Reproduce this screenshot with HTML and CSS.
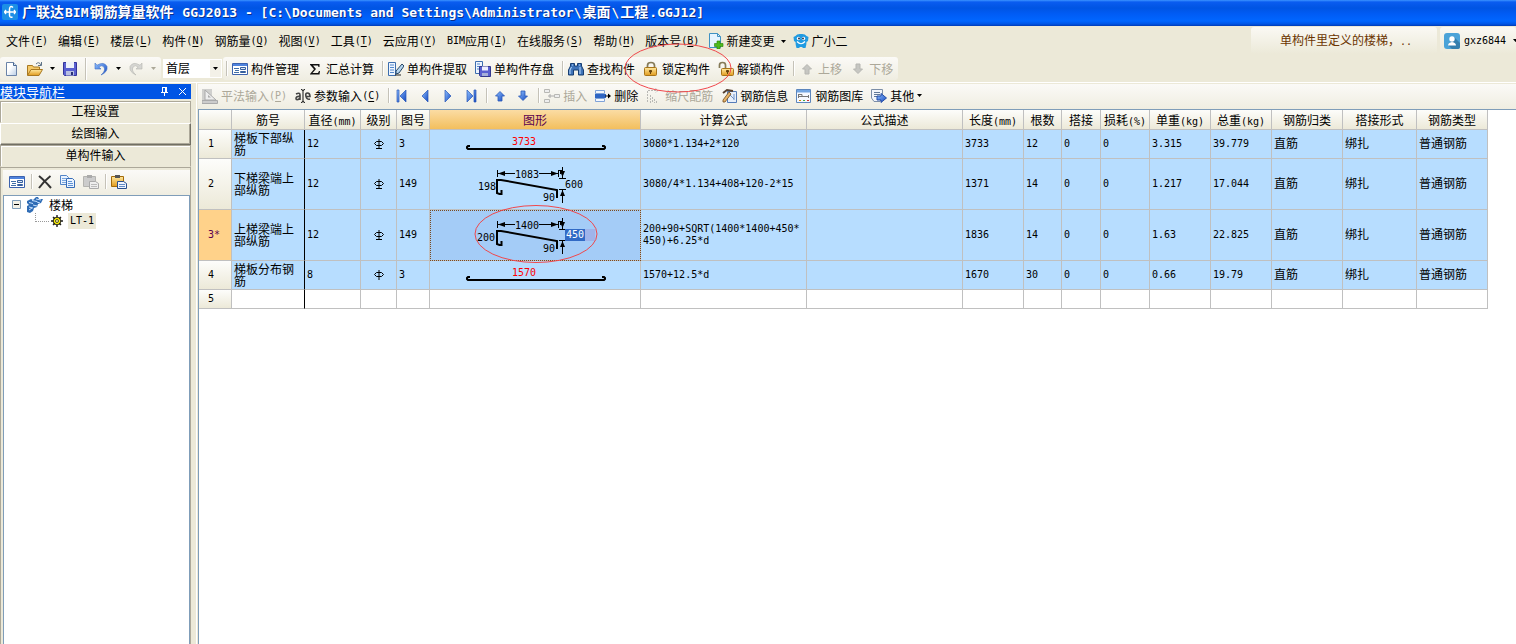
FILE: index.html
```html
<!DOCTYPE html>
<html lang="zh-CN">
<head>
<meta charset="utf-8">
<title>广联达BIM钢筋算量软件 GGJ2013</title>
<link rel="stylesheet" href="styles.css">
</head>
<body>
<svg class="sprite" aria-hidden="true">
  <defs>
    <linearGradient id="gBlue" x1="0" y1="0" x2="1" y2="1"><stop offset="0" stop-color="#8fc0ff"/><stop offset="1" stop-color="#1448c0"/></linearGradient>
    <linearGradient id="gGold" x1="0" y1="0" x2="0" y2="1"><stop offset="0" stop-color="#ffe9a0"/><stop offset="1" stop-color="#e09a1c"/></linearGradient>
    <linearGradient id="gPage" x1="0" y1="0" x2="1" y2="1"><stop offset="0.4" stop-color="#fff"/><stop offset="1" stop-color="#b8cde6"/></linearGradient>
  </defs>
  <symbol id="new" viewBox="0 0 16 16"><path d="M2.500 1.500h7l3 3v10h-10z" fill="url(#gPage)" stroke="#6a83a8"/><path d="M9.500 1.500v3h3" fill="#dbe8f7" stroke="#49668f"/></symbol>
  <symbol id="open" viewBox="0 0 16 16"><path d="M.5 14V4.500h5l1 1.500h6v3" fill="#f5c968" stroke="#a87821"/><path d="M.5 14.500L4 8.500h11.500l-3.500 6z" fill="url(#gGold)" stroke="#a87821"/><path d="M9 3q3-3 5 1M14.500 1v3.500H11" fill="none" stroke="#5e7286"/></symbol>
  <symbol id="save" viewBox="0 0 16 16"><path d="M1.500 1.500h13v13h-12l-1-1z" fill="#5a60d0" stroke="#34349a"/><path d="M4 1h8v6H4z" fill="#eef2fa"/><path d="M4 10h8v4.500H4z" fill="#b8bfe2"/><path d="M9 11h2v3H9z" fill="#272f78"/></symbol>
  <symbol id="undo" viewBox="0 0 16 16"><path d="M2 2v6h6L5.800 6Q9 3.500 11 6q2 4-3 8 7-3 6-8.500Q11 0 4 4.200z" fill="url(#gBlue)" stroke="#3f6fc5" stroke-width=".6"/></symbol>
  <symbol id="redo" viewBox="0 0 16 16"><path d="M14 2v6H8l2.200-2Q7 3.500 5 6q-2 4 3 8-7-3-6-8.500Q5 0 12 4.200z" fill="#d5d5d2" stroke="#b5b5b0" stroke-width=".6"/></symbol>
  <symbol id="form" viewBox="0 0 16 16"><path d="M.5 2.500h15v11H.5z" fill="#fff" stroke="#3c62ae"/><path d="M1 3h14v2H1z" fill="#4f83dd"/><path d="M2 7.500h5M3 9.500h4M2 11.500h5" stroke="#416fa8"/><path d="M8.500 6.500h5v2h-5zM8.500 10.500h5v1h-5z" fill="#dce7f6" stroke="#365f9e"/></symbol>
  <symbol id="sum" viewBox="0 0 16 16"><path d="M3 3h9.500v3h-1L11 4.500H6L9 8l-3.500 4H11l1-2h1l-.5 3.500H3V13l4-4.700L3 3.700z" fill="#111"/></symbol>
  <symbol id="extract" viewBox="0 0 16 16"><path d="M.5 1.500h7v13h-7z" fill="#eef5ff" stroke="#3d6eaf"/><path d="M2 4h4M2 6.500h4M2 9h4M2 11.500h4" stroke="#5287cc"/><path d="M14 3L8 10v3l3-1 5-7z" fill="#b6d5ef" stroke="#274665"/><path d="M7 14h6" stroke="#222"/></symbol>
  <symbol id="store" viewBox="0 0 16 16"><path d="M.5.500h7v12h-7z" fill="#eef5ff" stroke="#3d6eaf"/><path d="M2 3h3M2 5.500h3M2 8h3" stroke="#5287cc"/><path d="M4.500 5.500h11v10h-10l-1-1z" fill="#5a60d0" stroke="#33398e"/><path d="M7 5.500h6v4H7z" fill="#eef"/><path d="M7 12h6v3H7z" fill="#a7b0da"/></symbol>
  <symbol id="find" viewBox="0 0 16 16"><path d="M2.500 5V2.500h4V5h3V2.500h4V5l2 4v5h-5V9h-5v5h-5V9z" fill="#3f73b8" stroke="#173e73"/><path d="M3.500 6L2 9v4M12 6v7M4 4h1M11 4h1" fill="none" stroke="#b9dbff"/></symbol>
  <symbol id="lock" viewBox="0 0 16 16"><path d="M4.500 7V4.500q0-3 3.500-3t3.500 3V7" fill="none" stroke="#857a58" stroke-width="1.700"/><rect x="1.500" y="6.500" width="12" height="8" rx="1" fill="url(#gGold)" stroke="#a87419"/><path d="M6.500 9.500h2v1.500h-2zM7.500 10v3" fill="#68420b" stroke="#68420b"/></symbol>
  <symbol id="unlock" viewBox="0 0 16 16"><path d="M1.500 7V4q0-2.500 3-2.500t3 2.500v4" fill="none" stroke="#857a58" stroke-width="1.700"/><rect x="3.500" y="7.500" width="12" height="7" rx="1" fill="url(#gGold)" stroke="#a87419"/><path d="M8.500 9.500h2v1.500h-2zM9.500 10v3" fill="#68420b" stroke="#68420b"/></symbol>
  <symbol id="up" viewBox="0 0 16 16"><path d="M8 3.500l4.500 4.500h-2.500v5H6V8H3.500z" fill="url(#gBlue)" stroke="#2858b8" stroke-width=".8"/></symbol>
  <symbol id="down" viewBox="0 0 16 16"><path d="M8 12.500L3.500 8H6V3h4v5h2.500z" fill="url(#gBlue)" stroke="#2858b8" stroke-width=".8"/></symbol>
  <symbol id="upOff" viewBox="0 0 16 16"><path d="M8 3.500l4.500 4.500h-2.500v5H6V8H3.500z" fill="#c6c6c2" stroke="#b6b6b2"/></symbol>
  <symbol id="downOff" viewBox="0 0 16 16"><path d="M8 12.500L3.500 8H6V3h4v5h2.500z" fill="#c6c6c2" stroke="#b6b6b2"/></symbol>
  <symbol id="first" viewBox="0 0 16 16"><path d="M3 2h2v12H3zM12 2v12L6 8z" fill="url(#gBlue)" stroke="#2858b8" stroke-width=".7"/></symbol>
  <symbol id="prev" viewBox="0 0 16 16"><path d="M11 2v12L5 8z" fill="url(#gBlue)" stroke="#2858b8" stroke-width=".7"/></symbol>
  <symbol id="next" viewBox="0 0 16 16"><path d="M5 2v12l6-6z" fill="url(#gBlue)" stroke="#2858b8" stroke-width=".7"/></symbol>
  <symbol id="last" viewBox="0 0 16 16"><path d="M11 2h2v12h-2zM4 2v12l6-6z" fill="url(#gBlue)" stroke="#2858b8" stroke-width=".7"/></symbol>
  <symbol id="flat" viewBox="0 0 16 16"><path d="M0 1h10v11H0z" fill="#d0d0ce"/><path d="M3 2v10h11z" fill="#eee" stroke="#aaa"/><path d="M6 7v2.500h3z" fill="#aaa"/><path d="M0 12.500h15.500v3H0z" fill="#ccc" stroke="#aaa"/></symbol>
  <symbol id="param" viewBox="0 0 16 16"><path d="M1 6q4-2 4 1v5M5 8.500Q1 8 1 10.500t4 0M11 8.500h4Q15 5 12.500 5T11 8.500t4 2.500" fill="none" stroke="#444" stroke-width="1.600"/><path d="M6 1.500q2 0 2 1.500 0-1.500 2-1.500M8 3v10M6 14.500q2 0 2-1.500 0 1.500 2 1.500" fill="none" stroke="#111"/></symbol>
  <symbol id="insert" viewBox="0 0 16 16"><path d="M.5 1.500h5v3h-5zM.5 11.500h5v3h-5zM10.500 6.500h5v3h-5z" fill="#eee" stroke="#b8b8b4"/><path d="M4 8h6M6 6v4" stroke="#aaa"/></symbol>
  <symbol id="remove" viewBox="0 0 16 16"><path d="M.5 2.500h9v3h-9zM.5 10.500h9v3h-9z" fill="#f3f8ff" stroke="#7fa3d8"/><path d="M0 6h11v4H0z" fill="#2f66c4"/><path d="M10 8h5M13.500 6v4" fill="none" stroke="#111"/><path d="M13 5.500L16 8l-3 2.500z"/></symbol>
  <symbol id="scale" viewBox="0 0 16 16"><path d="M1.500 3v12M4.500 7v8M6.500 9v6M8.500 11v4M10.500 13v2M2 2.500h10M9.500 .500l2.500 2-2.500 2" fill="none" stroke="#b9b9b5" stroke-dasharray="2 1"/></symbol>
  <symbol id="info" viewBox="0 0 16 16"><path d="M6.500 3.500h9v11h-9z" fill="#e7effa" stroke="#557cb8"/><path d="M9 7l4 4M13 6v6" fill="none" stroke="#6f93c9"/><path d="M2 12L8 4l2 2-6 8H2z" fill="#e8b468" stroke="#6f4a20" stroke-width=".8"/><path d="M2 5l4-3 6 1" fill="none" stroke="#554030" stroke-width="2"/></symbol>
  <symbol id="library" viewBox="0 0 16 16"><path d="M.5 1.500h14v13H.5z" fill="#f6f9ff" stroke="#5d86bd"/><path d="M1 2h13v2.500H1z" fill="#72a5e2"/><path d="M2.500 6v4M2.500 8.500h10M12.500 7v3M3 6.500h3v2" fill="none" stroke="#777"/><path d="M3 12.500h2" stroke="#d80"/><path d="M7 12.500h2" stroke="#4a4"/><path d="M11 12.500h2" stroke="#c33"/></symbol>
  <symbol id="other" viewBox="0 0 16 16"><path d="M.5 1.500h11v8L9 13.500H3L.5 10z" fill="#f2f5fa" stroke="#7c8ea8"/><path d="M3 4.500h6M3 6.500h6M3 8.500h4" stroke="#607898"/><path d="M6 8h4V5.500L15.500 10 10 14.500V12H6z" fill="url(#gBlue)" stroke="#234ba4"/></symbol>
  <symbol id="change" viewBox="0 0 16 16"><path d="M1.500.500h8l3 3v11h-11z" fill="#e6f4ff" stroke="#3f91c3"/><path d="M9.500.500v3h3" fill="none" stroke="#3f91c3"/><path d="M9 8h3v2.500h3v3h-3V16H9v-2.500H6.500v-3H9z" fill="#4eb91d" stroke="#258300" stroke-width=".6"/></symbol>
  <symbol id="mascot" viewBox="0 0 16 16"><path d="M2.500 3Q4 .5 8 1q4-.5 5.500 2l2 1-.5 4-1.500 1q0 3-1 6H10l-1-1H7l-1 1H3.500q-1-3-1-6L1 8 .5 4z" fill="#219be1"/><circle cx="5.500" cy="5.500" r="1.700" fill="#fff"/><circle cx="10.500" cy="5.500" r="1.700" fill="#fff"/><circle cx="6" cy="5.500" r=".9" fill="#124"/><circle cx="10" cy="5.500" r=".9" fill="#124"/><path d="M4 8.500q4 4.500 8 0" fill="none" stroke="#fff" stroke-width="1.200"/></symbol>
  <symbol id="user" viewBox="0 0 16 16"><rect width="16" height="16" rx="3" fill="#4ba3d8"/><path d="M10 4l6 6v4q0 2-2 2H8l-4-4z" fill="#347fae"/><circle cx="8" cy="6" r="2.700" fill="#fff"/><path d="M4 12.500q0-3 4-3.500 4 .5 4 3.500z" fill="#fff"/></symbol>
  <symbol id="logo" viewBox="0 0 16 16"><rect width="16" height="16" rx="2" fill="#1c8fe6"/><path d="M11 3.500Q8 1 7.500 5v6q0 3 3 2M2 8h12M4 6q-2 2 0 4M12 6q2 2 0 4" fill="none" stroke="#fff" stroke-width="1.500"/></symbol>
  <symbol id="cross" viewBox="0 0 16 16"><path d="M2 2q5 4 12 12M13.500 2Q7 7 2 14" fill="none" stroke="#333" stroke-width="2"/></symbol>
  <symbol id="copy" viewBox="0 0 16 16"><path d="M.5 1.500h6l2 2v7h-8z" fill="#eaf3ff" stroke="#5284c7"/><path d="M2 4.500h4M2 6.500h4M2 8.500h4" stroke="#78a5dd"/><path d="M6.500 4.500h6l2 2v7h-8z" fill="#eaf3ff" stroke="#376db8"/><path d="M8 7.500h4M8 9.500h5M8 11.500h5" stroke="#5f92d4"/></symbol>
  <symbol id="pasteOff" viewBox="0 0 16 16"><path d="M.5 2.500h12v10H.5z" fill="#ccc" stroke="#b4b4b0"/><path d="M4 1h5v3H4z" fill="#aaa"/><path d="M6.500 7.500h6l3 2v5h-9z" fill="#eee" stroke="#aaa"/><path d="M8 10.500h6M8 12.500h6" stroke="#bbb"/></symbol>
  <symbol id="paste" viewBox="0 0 16 16"><path d="M.5 2.500h12v10H.5z" fill="url(#gGold)" stroke="#a36a09"/><path d="M4 1h5v3H4z" fill="#555"/><path d="M6.500 7.500h6l3 2v5h-9z" fill="#eef4ff" stroke="#274e8d"/><path d="M8 10.500h6M8 12.500h6" stroke="#618bc5"/></symbol>
  <symbol id="stairs" viewBox="0 0 16 16"><path d="M0 4l4-2 2 1 3-3h2l1 2h4l-2 4-3 1-1 3-3 1-1 3-3 2-3-1V9l2-1-2-2z" fill="#2f6cb5"/><path d="M2 5.500l4 1M5 3.500l5 1M9 2l5 1M2 10l4 1M6 8l4 1M2 13l3-2M10 5l3 1" stroke="#c8e2ff"/></symbol>
  <symbol id="gear" viewBox="0 0 12 12"><circle cx="6" cy="6" r="4" fill="#fff200" stroke="#222" stroke-width=".8"/><path d="M6 0v3M6 9v3M0 6h3M9 6h3M2 2l2 2M8 8l2 2M10 2L8 4M4 8l-2 2" stroke="#222" stroke-width="1.400"/><circle cx="6" cy="6" r="1.500" fill="#fff8a0" stroke="#222" stroke-width=".8"/></symbol>
  <symbol id="tri" viewBox="0 0 5 3"><path d="M0 0h5L2.500 3z" fill="currentColor"/></symbol>
  <symbol id="bar" viewBox="0 0 210 28"><path d="M40 16h-2l-1 1v1l1 1h136l1-1v-1l-1-1h-2" fill="none" stroke="#000" stroke-width="2"/></symbol>
  <symbol id="bent" viewBox="0 0 210 50"><path d="M71.500 31v4h-2L67 34V21h4l56 10v8" fill="none" stroke="#000" stroke-width="2"/><path d="M67.500 11v7M68 14.500h17M109 14.500h19M128.500 11v7M130.500 11v4M129 11.500h3M129 19.500h7M129 30.500h7M132.500 8v11M132.500 31v13" fill="none" stroke="#000"/><path d="M68 14.500l7-2.500v5zM128 14.500l-7-2.500v5zM132.500 18l-2.500-6h5zM132.500 31l-2.500 6h5z"/></symbol>
  <symbol id="grade3" viewBox="0 0 10 10"><path d="M5 0v9M2 9.500h6M2.500 2.500h5l2 2-2 2h-5l-2-2z"/></symbol>
  <symbol id="grade1" viewBox="0 0 10 10"><path d="M5 0v10M2.500 2.500h5l2 2-2 2h-5l-2-2z"/></symbol>
</svg>

<header class="title-bar"><svg class="ico"><use href="#logo"/></svg><h1>广联达<span>BIM</span>钢筋算量软件<span> GGJ2013 - [C:\Documents and Settings\Administrator\</span>桌面<span>\</span>工程<span>.GGJ12]</span></h1></header>

<div class="menu-row">
  <nav class="menu">
    <button>文件<span class="lat">(<u>F</u>)</span></button><button>编辑<span class="lat">(<u>E</u>)</span></button><button>楼层<span class="lat">(<u>L</u>)</span></button><button>构件<span class="lat">(<u>N</u>)</span></button><button>钢筋量<span class="lat">(<u>Q</u>)</span></button><button>视图<span class="lat">(<u>V</u>)</span></button><button>工具<span class="lat">(<u>T</u>)</span></button><button>云应用<span class="lat">(<u>Y</u>)</span></button><button><span class="lat">BIM</span>应用<span class="lat">(<u>I</u>)</span></button><button>在线服务<span class="lat">(<u>S</u>)</span></button><button>帮助<span class="lat">(<u>H</u>)</span></button><button>版本号<span class="lat">(<u>B</u>)</span></button>
    <button class="with-icon"><svg class="ico"><use href="#change"/></svg>新建变更<svg class="tri far"><use href="#tri"/></svg></button>
    <button class="with-icon mascot"><svg class="ico"><use href="#mascot"/></svg>广小二</button>
  </nav>
  <div class="account">
    <a class="notice" href="#">单构件里定义的楼梯，<span class="lat">..</span></a>
    <button class="user"><svg class="ico"><use href="#user"/></svg><span class="lat">gxz6844</span><svg class="tri far"><use href="#tri"/></svg></button>
  </div>
</div>

<div class="toolbar-row">
  <div class="bar files">
    <button aria-label="新建"><svg class="ico"><use href="#new"/></svg></button>
    <button aria-label="打开"><svg class="ico"><use href="#open"/></svg><svg class="tri mid"><use href="#tri"/></svg></button>
    <button aria-label="保存"><svg class="ico"><use href="#save"/></svg></button>
    <i class="sep tall"></i>
    <button aria-label="撤销"><svg class="ico"><use href="#undo"/></svg><svg class="tri mid"><use href="#tri"/></svg></button>
    <button aria-label="恢复" disabled><svg class="ico"><use href="#redo"/></svg><svg class="tri mid"><use href="#tri"/></svg></button>
  </div>
  <div class="floor"><select aria-label="楼层"><option>首层</option></select><span class="drop"><svg class="tri"><use href="#tri"/></svg></span></div>
  <div class="bar members">
    <i class="sep"></i>
    <button><svg class="ico"><use href="#form"/></svg>构件管理</button>
    <button><svg class="ico"><use href="#sum"/></svg>汇总计算</button>
    <i class="sep"></i>
    <button><svg class="ico"><use href="#extract"/></svg>单构件提取</button>
    <button><svg class="ico"><use href="#store"/></svg>单构件存盘</button>
    <i class="sep"></i>
    <button><svg class="ico"><use href="#find"/></svg>查找构件</button>
    <button class="marked"><svg class="ico"><use href="#lock"/></svg>锁定构件<svg class="mark" viewBox="0 0 110 50"><ellipse cx="55" cy="25" rx="53" ry="24"/></svg></button>
    <button><svg class="ico"><use href="#unlock"/></svg>解锁构件</button>
    <i class="sep"></i>
    <button disabled><svg class="ico"><use href="#upOff"/></svg>上移</button>
    <button disabled><svg class="ico"><use href="#downOff"/></svg>下移</button>
  </div>
</div>

<div class="workspace">
  <aside class="side">
    <div class="side-title"><h2>模块导航栏</h2>
      <button aria-label="固定"><svg viewBox="0 0 9 9"><path d="M2.500 0v5M1 5.500h7M4.500 6v3M2 .500h4M5.500 0v5M6.500 0v5" fill="none" stroke="#fff"/></svg></button>
      <button aria-label="关闭"><svg viewBox="0 0 9 9"><path d="M1 1l7 7M8 1L1 8" stroke="#fff"/></svg></button>
    </div>
    <button class="module">工程设置</button>
    <button class="module raised">绘图输入</button>
    <button class="module">单构件输入</button>
    <div class="panel">
      <div class="bar panel-tools">
        <button aria-label="属性"><svg class="ico"><use href="#form"/></svg></button>
        <i class="sep"></i>
        <button aria-label="删除"><svg class="ico"><use href="#cross"/></svg></button>
        <button aria-label="复制"><svg class="ico"><use href="#copy"/></svg></button>
        <button aria-label="粘贴" disabled><svg class="ico"><use href="#pasteOff"/></svg></button>
        <i class="sep"></i>
        <button aria-label="粘贴构件"><svg class="ico"><use href="#paste"/></svg></button>
      </div>
      <ul class="tree">
        <li><div class="node"><svg class="twist" viewBox="0 0 9 9"><path d="M.5.500h8v8h-8z" fill="#f2f0e6" stroke="#7f9db9"/><path d="M2 4.500h5" stroke="#000"/></svg><svg class="ico"><use href="#stairs"/></svg><span>楼梯</span></div>
          <ul><li class="leaf"><svg class="gear"><use href="#gear"/></svg><span class="picked lat">LT-1</span></li></ul>
        </li>
      </ul>
    </div>
  </aside>

  <main class="main">
    <div class="bar edit">
      <button disabled><svg class="ico"><use href="#flat"/></svg>平法输入<span class="lat">(<u>P</u>)</span></button>
      <button><svg class="ico"><use href="#param"/></svg>参数输入<span class="lat">(<u>C</u>)</span></button>
      <i class="sep"></i>
      <button class="nav" aria-label="第一条"><svg class="ico"><use href="#first"/></svg></button>
      <button class="nav" aria-label="上一条"><svg class="ico"><use href="#prev"/></svg></button>
      <button class="nav" aria-label="下一条"><svg class="ico"><use href="#next"/></svg></button>
      <button class="nav" aria-label="最后一条"><svg class="ico"><use href="#last"/></svg></button>
      <i class="sep"></i>
      <button class="nav" aria-label="上移一行"><svg class="ico"><use href="#up"/></svg></button>
      <button class="nav" aria-label="下移一行"><svg class="ico"><use href="#down"/></svg></button>
      <i class="sep"></i>
      <button disabled><svg class="ico"><use href="#insert"/></svg>插入</button>
      <button><svg class="ico"><use href="#remove"/></svg>删除</button>
      <button disabled><svg class="ico"><use href="#scale"/></svg>缩尺配筋</button>
      <button><svg class="ico"><use href="#info"/></svg>钢筋信息</button>
      <button><svg class="ico"><use href="#library"/></svg>钢筋图库</button>
      <button><svg class="ico"><use href="#other"/></svg>其他<svg class="tri near"><use href="#tri"/></svg></button>
    </div>
    <div class="sheet">
    <table>
      <colgroup><col class="w33"><col class="w73"><col class="w56"><col class="w36"><col class="w33"><col class="w211"><col class="w166"><col class="w156"><col class="w61"><col class="w38"><col class="w39"><col class="w49"><col class="w61"><col class="w61"><col class="w71"><col class="w74"><col class="w71"></colgroup>
      <thead><tr><th></th><th>筋号</th><th>直径<span class="lat">(mm)</span></th><th>级别</th><th>图号</th><th class="active">图形</th><th>计算公式</th><th>公式描述</th><th>长度<span class="lat">(mm)</span></th><th>根数</th><th>搭接</th><th>损耗<span class="lat">(%)</span></th><th>单重<span class="lat">(kg)</span></th><th>总重<span class="lat">(kg)</span></th><th>钢筋归类</th><th>搭接形式</th><th>钢筋类型</th></tr></thead>
      <tbody>
        <tr class="short"><th>1</th><td class="name">梯板下部纵筋</td><td>12</td><td class="grade"><svg><use href="#grade3"/></svg></td><td>3</td>
          <td class="shape"><svg viewBox="0 0 210 28"><use href="#bar"/><text class="red" x="82" y="15">3733</text></svg></td>
          <td>3080*1.134+2*120</td><td></td><td>3733</td><td>12</td><td>0</td><td>0</td><td>3.315</td><td>39.779</td><td class="cjk">直筋</td><td class="cjk">绑扎</td><td class="cjk">普通钢筋</td></tr>
        <tr class="high"><th>2</th><td class="name">下梯梁端上部纵筋</td><td>12</td><td class="grade"><svg><use href="#grade3"/></svg></td><td>149</td>
          <td class="shape"><svg viewBox="0 0 210 50"><use href="#bent"/><text x="85" y="19">1083</text><text x="48" y="31">198</text><text x="113" y="42">90</text><text x="135" y="29">600</text></svg></td>
          <td>3080/4*1.134+408+120-2*15</td><td></td><td>1371</td><td>14</td><td>0</td><td>0</td><td>1.217</td><td>17.044</td><td class="cjk">直筋</td><td class="cjk">绑扎</td><td class="cjk">普通钢筋</td></tr>
        <tr class="high current"><th>3*</th><td class="name">上梯梁端上部纵筋</td><td>12</td><td class="grade"><svg><use href="#grade3"/></svg></td><td>149</td>
          <td class="shape editing"><svg viewBox="0 0 210 50"><use href="#bent"/><text x="85" y="19">1400</text><text x="47" y="31">200</text><text x="113" y="42">90</text></svg><input class="dim" aria-label="尺寸" value="450"><svg class="mark" viewBox="0 0 124 60"><ellipse cx="62" cy="30" rx="61" ry="28.500"/></svg></td>
          <td>200+90+SQRT(1400*1400+450*<br>450)+6.25*d</td><td></td><td>1836</td><td>14</td><td>0</td><td>0</td><td>1.63</td><td>22.825</td><td class="cjk">直筋</td><td class="cjk">绑扎</td><td class="cjk">普通钢筋</td></tr>
        <tr class="short"><th>4</th><td class="name">梯板分布钢筋</td><td>8</td><td class="grade"><svg><use href="#grade1"/></svg></td><td>3</td>
          <td class="shape"><svg viewBox="0 0 210 28"><use href="#bar"/><text class="red" x="82" y="15">1570</text></svg></td>
          <td>1570+12.5*d</td><td></td><td>1670</td><td>30</td><td>0</td><td>0</td><td>0.66</td><td>19.79</td><td class="cjk">直筋</td><td class="cjk">绑扎</td><td class="cjk">普通钢筋</td></tr>
        <tr class="blank"><th>5</th><td class="name"></td><td></td><td></td><td></td><td></td><td></td><td></td><td></td><td></td><td></td><td></td><td></td><td></td><td></td><td></td><td></td></tr>
      </tbody>
    </table>
    </div>
  </main>
</div>
</body>
</html>
```
FILE: styles.css
```css
* { box-sizing: border-box; }
body {
  margin: 0;
  min-height: 100vh;
  display: flex;
  flex-direction: column;
  overflow: hidden;
  background: #ece9d8;
  color: #000;
  font: 12px/14px "Noto Sans CJK SC", sans-serif;
}
button {
  display: flex;
  align-items: center;
  margin: 0;
  padding: 0;
  border: 0;
  background: none;
  color: inherit;
  font: inherit;
  white-space: nowrap;
}
button:disabled { color: #aca899; }
h1, h2, ul { margin: 0; padding: 0; list-style: none; }
svg { display: block; flex: none; }
u { text-underline-offset: 2px; }
.sprite { position: absolute; width: 0; height: 0; }
.ico { width: 16px; height: 16px; }
.tri { width: 5px; height: 3px; }
.lat { font: 10px/14px "DejaVu Sans Mono", monospace; }

.title-bar {
  display: flex;
  align-items: center;
  gap: 4px;
  height: 26px;
  padding: 0 0 2px 2px;
  background: linear-gradient(#3c93ff 0, #0a5cf0 2px, #0054e3 8px, #005cf5 14px, #0066ff 21px, #0055e5 24px, #003bb5 26px);
}
.title-bar h1 {
  color: #fff;
  font: bold 14px/20px "Noto Sans CJK SC", sans-serif;
  white-space: pre;
  text-shadow: 1px 1px #0a2f8a;
}
.title-bar h1 span { padding: 0 1px; font: bold 13px/20px "DejaVu Sans Mono", monospace; }

.menu-row { display: flex; justify-content: space-between; height: 31px; }
.menu { display: flex; gap: 10px; padding-left: 6px; height: 30px; }
.menu .with-icon { gap: 2px; margin-left: -1px; }
.menu .mascot { margin-left: -3px; }
.tri.far { margin-left: 5px; }
.account { display: flex; gap: 3px; padding-top: 1px; }
.notice, .user { height: 27px; background: linear-gradient(#faf9f4, #ece9d8); border-radius: 3px; }
.notice {
  width: 186px;
  padding: 6px 0 0 29px;
  color: #6b3500;
  text-decoration: none;
  white-space: nowrap;
}
.user { width: 76px; padding-left: 4px; gap: 4px; overflow: hidden; }
.user .tri { margin-left: 3px; }

.toolbar-row { display: flex; height: 26px; border-bottom: 1px solid #fff; }
.bar { display: flex; align-items: center; background: linear-gradient(#fbfaf7, #efede1); }
.bar button { gap: 3px; padding-right: 8px; height: 22px; }
.bar .lat { margin-left: -3px; }
.bar .tri { color: #000; }
.bar :disabled .tri { color: #aca899; }
.sep { width: 2px; height: 15px; margin-right: 4px; background: #c5c2b8; border-right: 1px solid #fff; }
.sep.tall { height: 22px; margin-right: 6px; }
.toolbar-row .bar { height: 23px; border-radius: 3px; }
.files { padding: 0 3px 0 4px; }
.files button { padding-right: 7px; }
.files button:last-child { padding-right: 2px; }
.tri.mid { margin-left: 4px; }
.floor { display: flex; align-items: center; margin: 2px 1px 0 2px; width: 59px; height: 19px; background: #fff; position: relative; }
.floor select { width: 100%; height: 17px; padding: 0 0 2px 3px; border: 0; background: none; appearance: none; font: inherit; line-height: 15px; }
.drop { position: absolute; right: 1px; top: 1px; width: 11px; height: 17px; display: grid; place-items: center; background: #f3f1e8; pointer-events: none; }
.members { padding: 0 3px 0 3px; }
.members button:last-child { padding-right: 2px; }
.marked { position: relative; }
.mark { position: absolute; fill: none; stroke: #f0484c; stroke-width: 1; pointer-events: none; z-index: 2; }
.marked .mark { width: 110px; height: 50px; left: -20px; top: -15px; }

.workspace { flex: 1; display: flex; }
.side { width: 192px; display: flex; flex-direction: column; padding: 1px 1px 0 0; }
.side-title { display: flex; align-items: center; gap: 9px; height: 15px; padding-right: 4px; margin-bottom: 2px; background: #0055e5; color: #fff; }
.side-title h2 { flex: 1; font: 13px/14px "Noto Sans CJK SC", sans-serif; }
.side-title svg { width: 9px; height: 9px; }
.module { justify-content: center; height: 22px; padding-bottom: 2px; border: 1px solid; border-color: #aca899 #aca899 #ece9d8 #aca899; box-shadow: inset 1px 1px #fff; }
.module.raised { border-color: #fff #716f64 #716f64 #fff; box-shadow: inset -1px -1px #aca899; }
.panel { flex: 1; display: flex; flex-direction: column; border: solid #aca899; border-width: 1px 1px 0; padding: 2px 0 0 2px; }
.panel-tools { height: 25px; padding: 0 0 2px 6px; }
.panel-tools button { padding-right: 6px; }
.panel-tools button + button { padding-left: 1px; }
.tree { flex: 1; background: #fff; border: solid #7f9db9; border-width: 1px 1px 0; padding: 0 0 0 8px; }
.node { display: flex; align-items: center; gap: 6px; height: 17px; }
.node span { line-height: 16px; }
.twist { width: 9px; height: 9px; }
.leaf { display: flex; align-items: center; height: 16px; margin-left: 24px; }
.leaf::before { content: ""; width: 13px; height: 8px; margin: -8px 2px 0 -1px; border: dotted #999; border-width: 0 0 1px 1px; }
.gear { width: 12px; height: 12px; margin-right: 5px; }
.picked { padding: 1px 2px; background: #ece9d8; }

.main { flex: 1; min-width: 0; display: flex; flex-direction: column; margin-left: 4px; padding-top: 1px; border-left: 1px solid #fff; }
.edit { height: 25px; padding: 0 0 2px 4px; margin-left: 1px; }
.edit .nav { padding-right: 7px; }
.sheet { flex: 1; margin-left: 1px; background: #fff; border: solid #7f9db9; border-width: 1px 0 0 1px; overflow: hidden; }

table { width: 1289px; table-layout: fixed; border-collapse: separate; border-spacing: 0; }
.w33 { width: 33px; } .w36 { width: 36px; } .w38 { width: 38px; } .w39 { width: 39px; }
.w49 { width: 49px; } .w56 { width: 56px; } .w61 { width: 61px; } .w71 { width: 71px; }
.w73 { width: 73px; } .w74 { width: 74px; } .w156 { width: 156px; } .w166 { width: 166px; } .w211 { width: 211px; }
th, td { padding: 0 2px; border: solid #c0c0c0; border-width: 0 1px 1px 0; overflow: hidden; }
th { font-weight: normal; background: linear-gradient(#fdfdfb, #ece9d8); }
thead th { height: 20px; padding: 0; line-height: 16px; white-space: nowrap; }
thead .lat { line-height: 12px; }
thead .active { background: linear-gradient(#fbdca4, #f3bf5d); color: #5a0050; }
tbody th { padding-right: 10px; }
tbody th, td { font: 10px/12px "DejaVu Sans Mono", monospace; white-space: nowrap; }
td { background: #b7ddff; }
.name, .cjk { font: 12px/12px "Noto Sans CJK SC", sans-serif; }
.cjk { padding-bottom: 2px; }
.name { white-space: normal; border-right-color: #000; }
.short > * { height: 29px; }
.high > * { height: 51px; }
.blank > * { height: 19px; }
.blank td { background: #fff; }
.current th { background: #ffd28a; color: #5a0050; padding-right: 4px; }
.grade svg { width: 10px; height: 10px; margin: 0 auto; fill: none; stroke: #000; }
.shape { padding: 0; overflow: visible; position: relative; }
.shape > svg:first-child { width: 100%; }
.shape text { font: 10px "DejaVu Sans Mono", monospace; }
.shape .red { fill: #f00; }
.editing { background: #a4ccf7; outline: 1px dotted #7a4a1e; outline-offset: -1px; }
.editing .mark { width: 124px; height: 60px; left: 44px; top: -6px; }
.dim { position: absolute; left: 135px; top: 19px; width: 20px; height: 12px; padding: 0 1px; border: 0; background: #316ac5; color: #fff; font: 10px/12px "DejaVu Sans Mono", monospace; box-shadow: 10px 0 #a0b4ea; }
```
